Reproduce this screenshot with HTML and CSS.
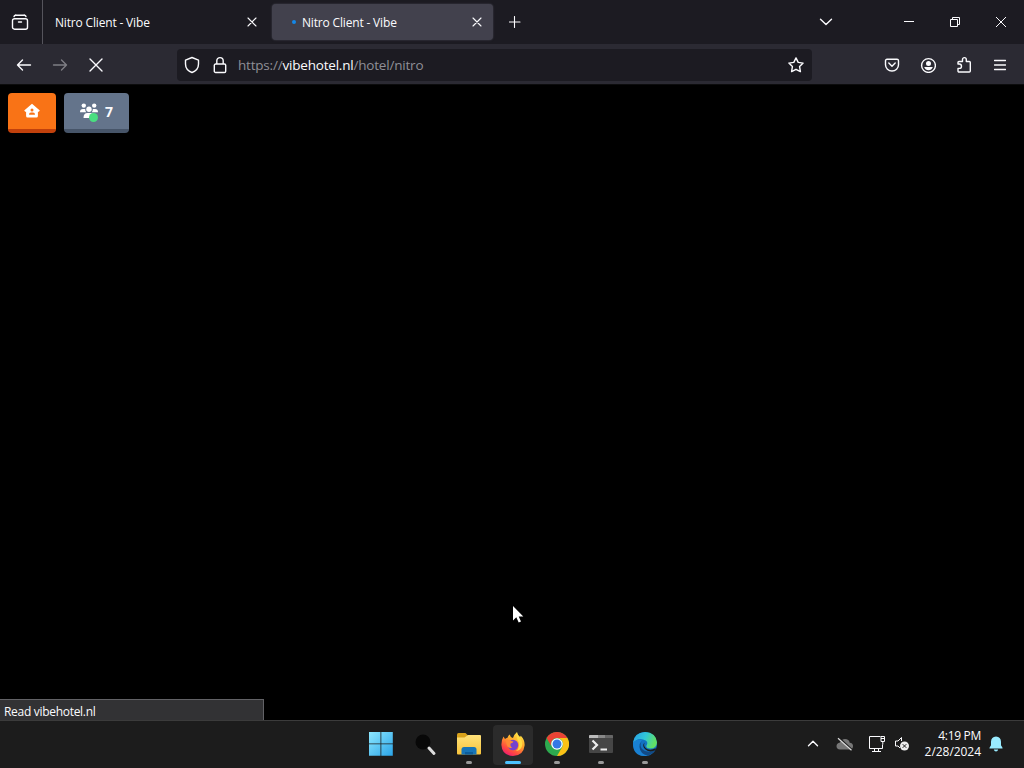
FILE: index.html
```html
<!DOCTYPE html>
<html lang="en">
<head>
  <meta charset="UTF-8" />
  <meta name="viewport" content="width=device-width, initial-scale=1.0"/>
  <title>Nitro Client - Vibe</title>
  <link rel="stylesheet" href="styles.css">
</head>
<body>

  <header class="tab-bar">
    <div class="firefox-view">
      <svg class="icon" width="18" height="18" viewBox="0 0 18 18"><path d="M4.5 2.2h9M3.500 5.700h11a2 2 0 0 1 2 2v6.500a2 2 0 0 1-2 2h-11a2 2 0 0 1-2-2v-6.500a2 2 0 0 1 2-2zM7.500 9h3"/><path d="M3 3.500q.3-1.300 1.800-1.300M15 3.500q-.3-1.300-1.800-1.300"/></svg>
    </div>
    <div class="tab">
      <span class="tab-title">Nitro Client - Vibe</span>
      <svg class="icon" width="10" height="10" viewBox="0 0 10 10"><path d="M1 1l8 8M9 1l-8 8"/></svg>
    </div>
    <div class="tab tab-active">
      <span class="tab-loading"></span>
      <span class="tab-title">Nitro Client - Vibe</span>
      <svg class="icon" width="10" height="10" viewBox="0 0 10 10"><path d="M1 1l8 8M9 1l-8 8"/></svg>
    </div>
    <div class="new-tab">
      <svg class="icon" width="12" height="12" viewBox="0 0 12 12"><path d="M5.500 .5v11M0 6h11"/></svg>
    </div>
    <div class="all-tabs">
      <svg class="icon" width="14" height="8" viewBox="0 0 14 8"><path d="M1.500 1.200L7 6.500l5.500-5.300"/></svg>
    </div>
    <div class="window-buttons">
      <span><svg class="icon thin" width="10" height="10" viewBox="0 0 10 10"><path d="M0 4.500h10"/></svg></span>
      <span><svg class="icon thin" width="10" height="10" viewBox="0 0 10 10"><path d="M.5 2.500h7v7h-7zM2.500 2.500v-2h7v7h-2"/></svg></span>
      <span><svg class="icon thin" width="10" height="10" viewBox="0 0 10 10"><path d="M0 0l10 10M10 0L0 10"/></svg></span>
    </div>
  </header>

  <nav class="nav-bar">
    <div class="nav-buttons">
      <span><svg class="icon" width="16" height="16" viewBox="0 0 16 16"><path d="M14.500 8H1.500M6.500 3L1.500 8l5 5"/></svg></span>
      <span class="disabled"><svg class="icon" width="16" height="16" viewBox="0 0 16 16"><path d="M1.500 8h13M9.500 3l5 5-5 5"/></svg></span>
      <span><svg class="icon" width="16" height="16" viewBox="0 0 16 16"><path d="M2 2l12 12M14 2L2 14"/></svg></span>
    </div>
    <div class="url-bar">
      <svg class="icon" width="16" height="18" viewBox="0 0 16 18"><path d="M8 1.500l6.500 2.700V8c0 4-3 7.200-6.500 8.500C4.500 15.200 1.500 12 1.500 8V4.200z"/></svg>
      <svg class="icon lock" width="14" height="18" viewBox="0 0 14 18"><path d="M2.600 8h8.800a1.300 1.300 0 0 1 1.300 1.300v5.900a1.300 1.300 0 0 1-1.300 1.300H2.600a1.300 1.300 0 0 1-1.300-1.300V9.300A1.300 1.300 0 0 1 2.600 8zM3.800 8V4.800a3.200 3.200 0 0 1 6.400 0V8"/></svg>
      <span class="url">https://<b>vibehotel.nl</b>/hotel/nitro</span>
      <svg class="icon star" width="16" height="16" viewBox="0 0 16 16"><path d="M8 .9l2.200 4.500 4.900.7-3.500 3.500.8 5L8 12.300l-4.400 2.300.8-5L.9 6.100l4.900-.7z"/></svg>
    </div>
    <div class="toolbar">
      <span><svg class="icon" width="16" height="16" viewBox="0 0 16 16"><path d="M3 2.200h10a1.500 1.500 0 0 1 1.500 1.500v4a6.500 6.300 0 0 1-13 0v-4A1.500 1.500 0 0 1 3 2.200zM4.800 6L8 9.200 11.200 6"/></svg></span>
      <span><svg class="icon" width="16" height="16" viewBox="0 0 16 16"><circle cx="8.500" cy="8.500" r="6.900"/><circle class="solid" cx="8.500" cy="6.500" r="2.500"/><path class="solid" d="M4.200 10h8.600q-1.300 3.200-4.300 3.200T4.200 10z"/></svg></span>
      <span><svg class="icon" width="16" height="18" viewBox="0 0 16 18"><path d="M2 8V6.500a1 1 0 0 1 1-1h3.500V3.500a1.900 1.900 0 0 1 3.800 0v2h3a1 1 0 0 1 1 1V15a1 1 0 0 1-1 1H3a1 1 0 0 1-1-1v-2.600h1.300a2.200 2.200 0 0 0 0-4.400z"/></svg></span>
      <span><svg class="icon" width="12" height="12" viewBox="0 0 12 12"><path d="M.5 1.500h11M.5 6h11M.5 10.500h11"/></svg></span>
    </div>
  </nav>

  <main class="page">
    <div class="hotel-buttons">
      <a class="hotel-btn home-btn">
        <svg width="16" height="16" viewBox="0 0 16 16"><path fill="#fff" d="M8 .8l7.800 6.700-1 1.300h-.9V13a1.500 1.500 0 0 1-1.500 1.500H3.600A1.500 1.500 0 0 1 2.100 13V8.800h-.9l-1-1.300z"/><circle cx="8" cy="7" r="1.500" fill="#f97316"/><path fill="#f97316" d="M5 11.800q0-2.300 2-2.300h2q2 0 2 2.300z"/></svg>
      </a>
      <a class="hotel-btn online-btn">
        <span class="users">
          <svg width="18" height="16" viewBox="0 0 18 16" fill="#fff"><circle cx="3.800" cy="2.600" r="2.200"/><circle cx="14.200" cy="2.600" r="2.200"/><circle cx="9" cy="6.300" r="2.700"/><path d="M0 9.300Q0 6 3 6h2.200q-.2 2 1 3.300zM18 9.300Q18 6 15 6h-2.200q.2 2-1 3.300zM3.500 15q0-5 4-5h3q4 0 4 5z"/></svg>
          <i class="online-dot"></i>
        </span>
        <span class="online-count">7</span>
      </a>
    </div>
    <svg class="cursor" width="12" height="19" viewBox="0 0 12 19"><path fill="#fff" d="M1 1v14.500l3.300-3.200 2.400 5.200 2.300-1-2.300-4.900h4.600z"/></svg>
    <div class="status-panel">Read vibehotel.nl</div>
  </main>

  <footer class="taskbar">
    <div class="apps">
      <span class="app">
        <svg width="24" height="24" viewBox="0 0 24 24">
          <defs><linearGradient id="win" x2="1" y2="1"><stop stop-color="#8ee8ff"/><stop offset="1" stop-color="#2aa4e8"/></linearGradient></defs>
          <path fill="url(#win)" d="M0 0h11.500v11.500H0zM12.300 0h11.500v11.500H12.300zM0 12.300h11.500v11.500H0zM12.300 12.300h11.500v11.500H12.300z"/>
        </svg>
      </span>
      <span class="app">
        <svg width="24" height="24" viewBox="0 0 24 24"><circle cx="10" cy="10" r="7.500" fill="#080808"/><path d="M16 16l5 5.500" stroke="#ddd" stroke-width="3" stroke-linecap="round"/></svg>
      </span>
      <span class="app running">
        <svg width="26" height="24" viewBox="0 0 26 24">
          <defs><linearGradient id="folder" x2="0" y2="1"><stop stop-color="#ffe27a"/><stop offset="1" stop-color="#f7c33b"/></linearGradient></defs>
          <path fill="#d9a21b" d="M1 2.500Q1 1 2.500 1h7L12 3.500v5H1z"/><path fill="url(#folder)" d="M1 5.500h7.500L12 3h12q1 0 1 1v17.500q0 1-1 1H2q-1 0-1-1z"/><path fill="#1775b8" d="M5.500 22.500v-5Q5.500 15 8 15h10q2.500 0 2.500 2.500v5z"/><path fill="#0d5d9b" d="M9 22.500V20h8v2.500z"/>
        </svg>
      </span>
      <span class="app running app-active">
        <svg width="24" height="24" viewBox="0 0 24 24">
          <defs>
            <linearGradient id="fox" x1=".8" y1="0" x2=".25" y2="1"><stop stop-color="#fff14a"/><stop offset=".4" stop-color="#ffa72a"/><stop offset=".75" stop-color="#ff4d3f"/><stop offset="1" stop-color="#ee1575"/></linearGradient>
          </defs>
          <path fill="url(#fox)" d="M2.500 4.500L4 7q1-1 2.500-1.200Q7 3.500 9 2.500q0 2.500 3 3.500 1-3.500 4-6 .5 3 3 5l.8-1.300Q24 8 23.600 13.500 22.500 23.700 12 24 1 23.500.4 13 .3 8 2.500 4.500z"/>
          <circle cx="12" cy="13" r="5.200" fill="#7542cf"/><path fill="#ff8a35" d="M5 8.500q3-1.500 5 .5l2.500.6q-.5 1.700-2.800 2-1 2.500 1.300 3.900-2 1.500-4.500-1Q5 12 5 8.500z"/><path fill="#ffdc43" d="M16.500 8q2 2.500 1.500 5.500-.2 3.500-3 5.500 6-1 6.300-7Q21 7 16 2q-.5 3 .5 6z"/>
        </svg>
      </span>
      <span class="app running">
        <svg width="24" height="24" viewBox="0 0 24 24"><circle cx="12" cy="12" r="12" fill="#2da94f"/><path fill="#ea4335" d="M1.600 6A12 12 0 0 1 22.400 6H12a6 6 0 0 0-5.200 9z"/><path fill="#fbc116" d="M22.400 6A12 12 0 0 1 12 24l5.200-9A6 6 0 0 0 12 6z"/><circle cx="12" cy="12" r="5.800" fill="#fff"/><circle cx="12" cy="12" r="4.500" fill="#3478e5"/></svg>
      </span>
      <span class="app running">
        <svg width="24" height="24" viewBox="0 0 24 24"><rect y="3" width="24" height="18" rx="1" fill="#464646"/><path fill="#bbb" d="M0 4q0-1 1-1h8v3H0z"/><path fill="#888" d="M9 3h7v3H9z"/><path fill="#666" d="M16 3h7q1 0 1 1v2h-8z"/><path d="M3.500 8.500L8 13l-4.500 4.500M11.500 17.500h6.500" fill="none" stroke="#eee" stroke-width="2.200"/></svg>
      </span>
      <span class="app running">
        <svg width="24" height="24" viewBox="0 0 24 24">
          <defs><linearGradient id="edge" x2="1" y2=".3"><stop stop-color="#279de5"/><stop offset=".55" stop-color="#30c6d8"/><stop offset="1" stop-color="#61df65"/></linearGradient></defs>
          <circle cx="12" cy="12" r="12" fill="#1372c3"/>
          <path fill="url(#edge)" d="M0 11Q1 .5 12 0q11 .5 12 10.500-.5 6-6.500 6-5 0-4-3 2-3-.8-5Q5.500 4.500 0 11z"/>
          <path fill="#1980d2" d="M0 11q4-5 9-3-3 3-2 8 2 6 8 7.700Q0 26 0 11z"/>
          <path fill="#124a86" d="M9 9q-3 4 0 8 5 5 13.500 1Q20 22 15 23.700 7 22 6.500 15 6.500 11 9 9z"/>
          <path fill="#1c1c1c" d="M11.500 10.500q-1.500 4.500 3 6.800 4 1.200 8-1 1 .5 0 2-6 2.500-10-.8-4-3.500-1-7z"/>
        </svg>
      </span>
    </div>
    <div class="tray">
      <svg class="icon chevron" width="12" height="8" viewBox="0 0 12 8"><path d="M1.500 5.700L6 1.200l4.500 4.500"/></svg>
      <svg class="cloud" width="18" height="16" viewBox="0 0 18 16"><path fill="#777" d="M4 13.500q-3.500-.3-3.500-3.500Q.6 7 4 6.500 5.500 3 9 3q4 0 4.700 3.700Q17 7 17 10q0 3.500-3.500 3.500z"/><path d="M3 2l13 12" stroke="#1c1c1c" stroke-width="2"/><path d="M2 2.300l13.500 12" stroke="#ddd" stroke-width="1.200"/></svg>
      <svg class="icon thin monitor" width="18" height="18" viewBox="0 0 18 18"><path d="M11.500 1.500h-11v12h13V9.500M3 16.500h9M5.500 13.500v3M9.500 13.500v3M12 1.500h3.500v5H12zM12 3.500h3.500M13.800 6.500v3"/></svg>
      <svg class="icon thin volume" width="16" height="16" viewBox="0 0 16 16"><path d="M7.500 5V1.500L4 5H1.500v5H4l2 2"/><circle cx="10.500" cy="10" r="4.500" fill="#eee" stroke="none"/><path d="M8.700 8.200l3.600 3.600M12.300 8.200l-3.600 3.600" stroke="#1c1c1c"/></svg>
      <div class="clock">
        <span class="time">4:19 PM</span>
        <span class="date">2/28/2024</span>
      </div>
      <svg width="14" height="16" viewBox="0 0 14 16"><path fill="#99ebff" d="M7 .5q4.800.3 5 5.200v3.500l1.500 2.500v.9H.5v-.9L2 9.200V5.700Q2.200.8 7 .5zM4.800 13.500h4.400q-.5 2-2.200 2t-2.200-2z"/></svg>
    </div>
  </footer>

</body>
</html>
```
FILE: styles.css
```css
* {
  box-sizing: border-box;
}

body {
  margin: 0;
  height: 768px;
  display: flex;
  flex-direction: column;
  overflow: hidden;
  background: #000;
  color: #fbfbfe;
  font-family: 'Segoe UI', 'Open Sans', 'Noto Sans', sans-serif;
  font-size: 12px;
}

svg {
  display: block;
  flex: none;
}

.icon {
  fill: none;
  stroke: #fbfbfe;
  stroke-width: 1.4;
  stroke-linecap: round;
  stroke-linejoin: round;
}

.icon .solid {
  fill: #fbfbfe;
  stroke: none;
}

.thin {
  stroke-width: 1;
  stroke-linecap: butt;
  stroke-linejoin: miter;
}

/* tabs */
.tab-bar {
  display: flex;
  align-items: center;
  height: 44px;
  background: #1c1b22;
}

.firefox-view {
  display: flex;
  align-items: center;
  width: 43px;
  height: 44px;
  padding-left: 11px;
  border-right: 1px solid #55545c;
}

.tab {
  display: flex;
  align-items: center;
  justify-content: space-between;
  width: 226px;
  height: 36px;
  margin-right: 3px;
  padding: 0 12px;
}

.tab .icon,
.new-tab .icon {
  stroke-width: 1.1;
}

.tab-title {
  padding-top: 1px;
  font-size: 12px;
  letter-spacing: -0.17px;
  white-space: nowrap;
}

.tab-active {
  justify-content: flex-start;
  width: 221px;
  margin-right: 0;
  padding: 0 11px 0 20px;
  border-radius: 4px;
  background: #42414d;
  box-shadow: 0 0 2px #4a4953;
}

.tab-active .icon {
  margin-left: auto;
}

.tab-loading {
  width: 4px;
  height: 4px;
  margin-right: 6px;
  border-radius: 50%;
  background: #1487e8;
}

.new-tab {
  display: flex;
  width: 44px;
  padding-left: 16px;
}

.all-tabs {
  margin-left: auto;
  margin-right: 53px;
}

.window-buttons {
  display: flex;
}

.window-buttons span {
  display: flex;
  justify-content: center;
  width: 46px;
}

/* navigation */
.nav-bar {
  display: flex;
  align-items: center;
  height: 41px;
  padding: 1px 6px 0;
  background: #2b2a33;
  border-bottom: 1px solid #0c0c0d;
}

.nav-buttons,
.toolbar {
  display: flex;
}

.nav-buttons span,
.toolbar span {
  display: flex;
  align-items: center;
  justify-content: center;
  width: 36px;
  height: 32px;
}

.disabled {
  opacity: 0.4;
}

.url-bar {
  display: flex;
  align-items: center;
  width: 635px;
  height: 32px;
  margin-left: 63px;
  padding: 0 8px 0 7px;
  border-radius: 4px;
  background: #1c1b22;
}

.lock {
  margin: 0 11px 0 13px;
}

.url {
  padding-top: 1px;
  color: #8f8f96;
  font-size: 13.5px;
  letter-spacing: -0.2px;
}

.url b {
  color: #fbfbfe;
  font-weight: normal;
}

.star {
  margin-left: auto;
}

.toolbar {
  margin-left: auto;
}

/* hotel page */
.page {
  position: relative;
  height: 635px;
  background: #000;
}

.hotel-buttons {
  display: flex;
  gap: 8px;
  padding: 8px;
}

.hotel-btn {
  display: flex;
  align-items: center;
  justify-content: center;
  height: 40px;
  border-radius: 4px;
  border-bottom: 4px solid;
}

.home-btn {
  width: 48px;
  background: #f97316;
  border-color: #c2410c;
}

.online-btn {
  width: 65px;
  gap: 7px;
  background: #64748b;
  border-color: #475569;
}

.users {
  position: relative;
}

.online-dot {
  position: absolute;
  left: 9px;
  top: 10px;
  width: 9px;
  height: 9px;
  border-radius: 50%;
  background: #4ade80;
}

.online-count {
  font-size: 14px;
  font-weight: 700;
}

.cursor {
  position: absolute;
  left: 512px;
  top: 520px;
}

.status-panel {
  position: absolute;
  left: 0;
  bottom: 0;
  width: 264px;
  height: 21px;
  padding-left: 4px;
  border: 1px solid #626266;
  border-left: 0;
  border-bottom: 0;
  background: #323234;
  line-height: 23px;
  letter-spacing: -0.3px;
}

/* taskbar */
.taskbar {
  display: flex;
  align-items: center;
  height: 48px;
  border-top: 1px solid #3b3b3b;
  background: #1c1c1c;
}

.apps {
  display: flex;
  gap: 4px;
  margin-left: 361px;
}

.app {
  display: flex;
  flex-direction: column;
  align-items: center;
  width: 40px;
  height: 40px;
  padding-top: 7px;
  border-radius: 4px;
}

.app svg {
  margin: 0 auto;
}

.running {
  justify-content: space-between;
}

.running::after {
  content: "";
  width: 6px;
  height: 3px;
  margin-bottom: 1px;
  border-radius: 2px;
  background: #999;
}

.app-active {
  background: #2b2b2b;
}

.app-active::after {
  width: 16px;
  background: #4cc2ff;
}

.tray {
  display: flex;
  align-items: center;
  margin-left: auto;
  padding-right: 21px;
  padding-bottom: 1px;
}

.chevron {
  margin-right: 17px;
}

.cloud {
  margin-right: 15px;
}

.monitor {
  margin-right: 7px;
}

.clock {
  display: flex;
  flex-direction: column;
  align-items: flex-end;
  width: 71px;
  margin-right: 8px;
  line-height: 16px;
  font-size: 12px;
  white-space: nowrap;
}

.time {
  letter-spacing: -0.3px;
}

.date {
  letter-spacing: -0.05px;
}
```
